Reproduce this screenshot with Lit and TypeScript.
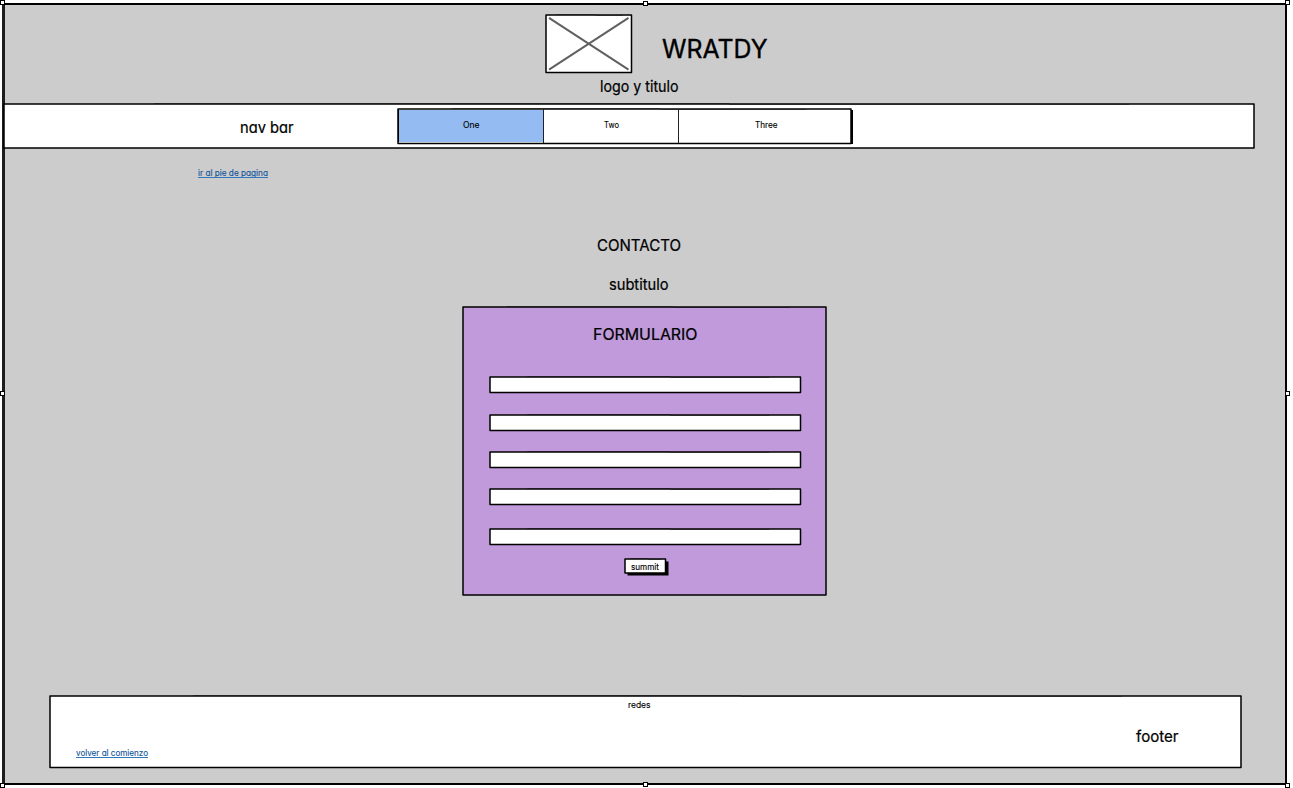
import { LitElement, html, svg, css, nothing } from "lit";
import { customElement, property } from "lit/decorators.js";

/* Hand-drawn rectangle that fills its positioned parent. */
@customElement("sketch-outline")
class SketchOutline extends LitElement {
  @property({ type: Number }) weight = 1.5;
  @property({ type: Boolean }) cross = false;
  @property() fill = "#fff";

  static styles = css`
    :host { position: absolute; inset: 0; z-index: 0; }
    svg { display: block; width: 100%; height: 100%; overflow: visible; }
    .cross { stroke: #606060; stroke-width: 2; }
    .pen { stroke: #000; stroke-linejoin: round; }
    .drift { stroke: #000; stroke-width: 1; opacity: 0.35; }
  `;

  render() {
    return html`
      <svg>
        <rect class="pen" width="100%" height="100%" fill=${this.fill} stroke-width=${this.weight}></rect>
        <line class="drift" x1="12%" y1="-.5" x2="58%" y2="-.5"></line>
        <line class="drift" x1="58%" y1=".5" x2="90%" y2=".5"></line>
        ${this.cross
          ? svg`<line class="cross" x1="3.5%" y1="5%" x2="96.5%" y2="95%"></line>
                <line class="cross" x1="96.5%" y1="5%" x2="3.5%" y2="95%"></line>`
          : nothing}
      </svg>`;
  }
}

/* One line of lettering, fitted to a given width. */
@customElement("sketch-label")
class SketchLabel extends LitElement {
  @property() text = "";
  @property({ type: Number }) size = 16;
  @property({ type: Number }) width = 50;
  @property({ type: Boolean }) link = false;

  static styles = css`
    :host { display: block; position: relative; z-index: 1; flex: none; }
    svg { display: block; overflow: visible; }
    text {
      font-family: Inter, Lato, sans-serif;
      font-feature-settings: "cv11" 1, "calt" 0;
      fill: #000;
      stroke: #000;
      stroke-width: 0.015em;
      stroke-linejoin: round;
    }
    .link { fill: #11549a; stroke: #11549a; }
    .rule { stroke: #2f78ba; stroke-width: 1; }
  `;

  render() {
    const base = Math.round(this.size);
    return html`<svg width=${this.width} height=${Math.ceil(this.size * 1.25)}>
      <text class=${this.link ? "link" : ""} x="0" y=${base} font-size=${this.size}
        textLength=${this.width} lengthAdjust="spacingAndGlyphs">${this.text}</text>
      ${this.link ? svg`<line class="rule" x1="0" x2=${this.width} y1=${base + 1.5} y2=${base + 1.5}></line>` : nothing}
    </svg>`;
  }
}

@customElement("app-root")
class AppRoot extends LitElement {
  static styles = css`
    :host { display: block; position: relative; width: 1293px; height: 788px; overflow: hidden; background: #fff; }
    * { box-sizing: border-box; }
    .page { display: flow-root; padding-top: 3px; }
    .frame {
      position: relative; display: flex; flex-direction: column; align-items: flex-start;
      width: 1284px; height: 781px; margin-left: 3px;
    }
    .edge {
      position: absolute; inset: 0 0 -1px -1px; background: #cccccc;
      border: 2px solid #000; border-left: 3px solid #1c1c1c;
    }
    .brand { display: flex; padding: 11px 0 0 542px; position: relative; }
    .logo { position: relative; width: 85.5px; height: 57.5px; margin: 1px 0.5px 0.5px 1px; }
    .title { margin: 18px 0 0 30px; }
    .caption { margin: 3px 0 0 596.5px; }
    .nav {
      position: relative; display: flex; align-items: flex-start;
      width: 1250px; height: 44px; margin: 8px 0 0 1px;
    }
    .navname { margin: 13px 0 0 236px; }
    .tabs {
      position: relative; display: grid; grid-template-columns: 145px 135px 173px;
      width: 453px; height: 34.5px; margin: 4.5px 0 0 104.5px;
      box-shadow: 2px 1px 0 #000;
    }
    .tab { position: relative; z-index: 1; display: flex; justify-content: center; padding: 10.5px 0 0 1px; border-left: 1.5px solid #222; }
    .tab:last-child { padding-left: 3px; }
    .tab.on { background: #94bbf2; margin: 1px 0; padding-top: 9.5px; border-left-color: #000; }
    .down { margin: 19px 0 0 194.5px; }
    .contact { margin: 55.5px 0 0 594px; }
    .sub { margin: 19px 0 0 606px; }
    .form {
      position: relative; display: flex; flex-direction: column; align-items: flex-start;
      width: 363px; height: 288px; margin: 13.5px 0 0 460px;
    }
    .formname { margin: 17px 0 0 129.5px; }
    .fields { display: grid; grid-template-rows: repeat(5, 15.5px); row-gap: 22px; width: 310.5px; margin: 32.5px 0 0 26.5px; }
    .field { position: relative; }
    .field:nth-child(2) { top: 0.5px; }
    .field:last-child { top: 2px; }
    .send {
      position: relative; width: 40.5px; height: 14px; margin: 17px 0 0 162px;
      display: flex; justify-content: center; padding-top: 1.5px; box-shadow: 2.5px 2.5px 0 #000;
    }
    .footer {
      position: relative; display: grid; grid-template-columns: 1fr auto 1fr;
      width: 1191px; height: 71.5px; margin: 101px 0 0 46.5px;
    }
    .up { margin: 50.5px 0 0 26.5px; }
    .social { margin-top: 2.5px; margin-right: 12px; }
    .footname { margin: 30px 62.5px 0 0; justify-self: end; }
    .handle { position: absolute; z-index: 3; width: 5px; height: 5px; border: 1px solid #000; background: #fff; }
    .l { left: 0; } .c { left: 643px; } .r { left: 1285px; }
    .t { top: 0; } .tc { top: 1px; } .m { top: 391px; } .b { top: 783px; } .bc { top: 782px; }
  `;

  private tabs = [
    { name: "One", width: 16.5 },
    { name: "Two", width: 15 },
    { name: "Three", width: 22.5 },
  ];
  private handles = ["l t", "c tc", "r t", "l m", "r m", "l b", "c bc", "r b"];

  private label(name: string, text: string, size: number, width: number, link = false) {
    return html`<sketch-label class=${name} .text=${text} .size=${size} .width=${width} .link=${link}></sketch-label>`;
  }

  render() {
    return html`
      <div class="page">
        <main class="frame">
          <div class="edge"></div>
          <header class="brand">
            <div class="logo"><sketch-outline cross></sketch-outline></div>
            ${this.label("title", "WRATDY", 25.5, 105.5)}
          </header>
          ${this.label("caption", "logo y titulo", 15.5, 78.5)}
          <nav class="nav">
            <sketch-outline></sketch-outline>
            ${this.label("navname", "nav bar", 16, 53.5)}
            <div class="tabs">
              <sketch-outline></sketch-outline>
              ${this.tabs.map(
                (t, i) => html`<div class="tab ${i === 0 ? "on" : ""}">${this.label("", t.name, 9, t.width)}</div>`
              )}
            </div>
          </nav>
          ${this.label("down", "ir al pie de pagina", 9, 70, true)}
          ${this.label("contact", "CONTACTO", 16, 84)}
          ${this.label("sub", "subtitulo", 15.5, 59.5)}
          <section class="form">
            <sketch-outline fill="#c09adb"></sketch-outline>
            ${this.label("formname", "FORMULARIO", 16, 104.5)}
            <div class="fields">
              ${[0, 1, 2, 3, 4].map(() => html`<div class="field"><sketch-outline></sketch-outline></div>`)}
            </div>
            <div class="send">
              <sketch-outline></sketch-outline>
              ${this.label("", "summit", 9, 28)}
            </div>
          </section>
          <footer class="footer">
            <sketch-outline></sketch-outline>
            ${this.label("up", "volver al comienzo", 9, 72, true)}
            ${this.label("social", "redes", 9, 22.5)}
            ${this.label("footname", "footer", 16, 42.5)}
          </footer>
        </main>
      </div>
      ${this.handles.map((h) => html`<i class="handle ${h}"></i>`)}
    `;
  }
}
